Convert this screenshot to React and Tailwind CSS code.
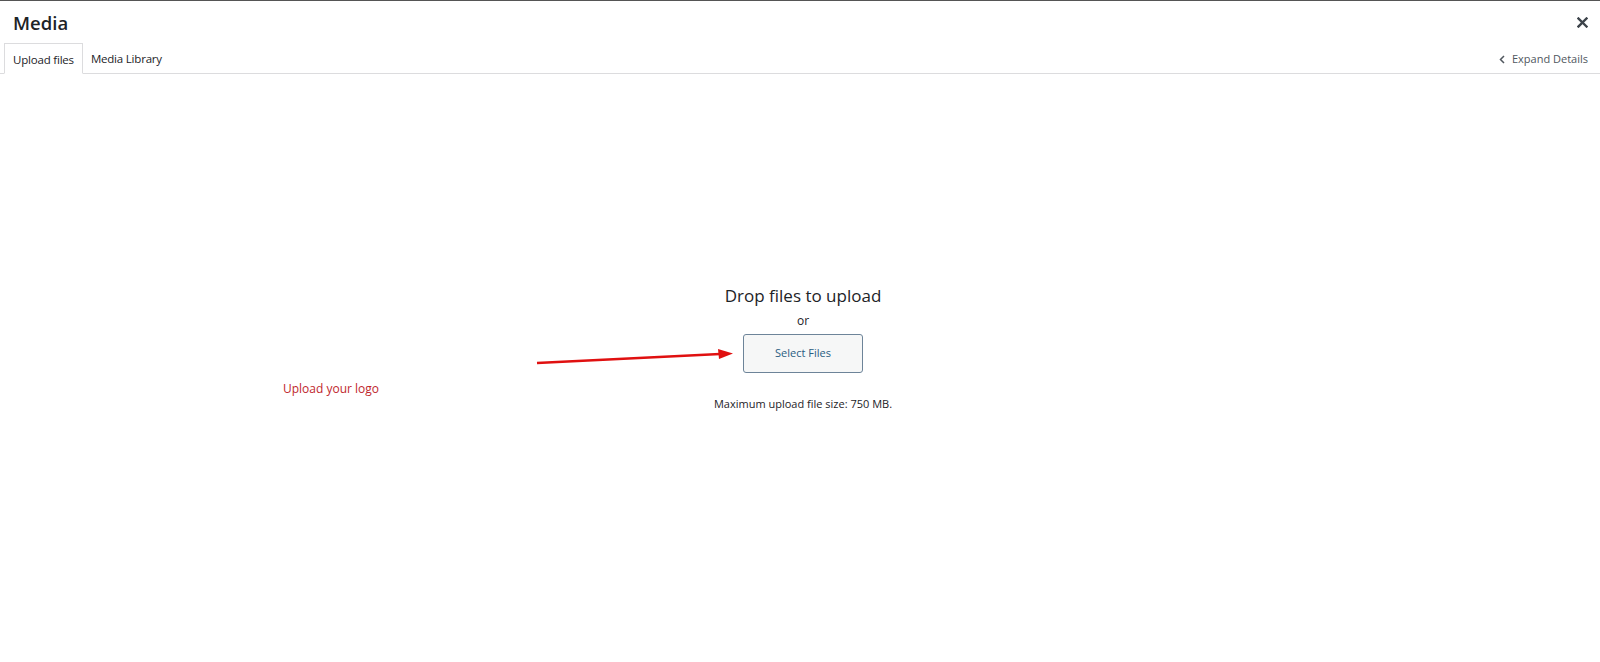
import React from 'react'

const CloseIcon = () => (
  <svg width="11" height="11" viewBox="0 0 11 11" className="block">
    <path d="M1.5 1.5 L9.5 9.5 M9.5 1.5 L1.5 9.5" stroke="#3c434a" strokeWidth="2.4" strokeLinecap="square" />
  </svg>
)

const ChevronLeft = () => (
  <svg width="6" height="9" viewBox="0 0 6 9" className="block">
    <path d="M5 1 L1.5 4.5 L5 8" stroke="#50575e" strokeWidth="1.5" fill="none" />
  </svg>
)

const App = () => {
  return (
    <div className="w-[1600px] h-[662px] bg-white border-t border-[#555] relative overflow-hidden font-['Segoe_UI','Open_Sans','Noto_Sans',sans-serif] text-[#1d2327]">
      {/* modal title */}
      <div className="h-[42px] flex items-center justify-between pl-[13px] pr-[10px]">
        <h1 className="text-[18.5px] font-semibold leading-none pt-[2px]">Media</h1>
        <button className="p-[2px]">
          <CloseIcon />
        </button>
      </div>

      {/* tabs */}
      <div className="h-[31px] flex items-end justify-between border-b border-[#dcdcde] pl-[4px] pr-[12px]">
        <div className="flex items-end h-full">
          <div className="h-[31px] -mb-px px-[8px] pt-[3px] flex items-center bg-white border border-[#dcdcde] border-b-white text-[11.5px] tracking-[-0.2px] text-[#1d2327]">
            Upload files
          </div>
          <div className="h-[31px] px-[8px] pt-[3px] flex items-center text-[11.5px] tracking-[-0.2px] text-[#1d2327]">
            Media Library
          </div>
        </div>
        <div className="h-full pt-[3px] flex items-center gap-[7px] text-[11px] text-[#50575e]">
          <ChevronLeft />
          <span>Expand Details</span>
        </div>
      </div>

      {/* upload area */}
      <div className="flex flex-col items-center pt-[210px] pl-[6px]">
        <h2 className="text-[17px] leading-[24px] text-[#1d2327]">Drop files to upload</h2>
        <p className="text-[12px] leading-[18px] mt-[4px] text-[#1d2327]">or</p>
        <button className="mt-[4px] w-[120px] h-[39px] rounded-[3px] border border-[#6d8499] bg-[#f6f7f7] text-[11px] text-[#2a5d82]">
          Select Files
        </button>
        <p className="mt-[22px] text-[11px] leading-[18px] text-[#1d2327]">Maximum upload file size: 750 MB.</p>
      </div>

      {/* annotation */}
      <svg className="absolute left-[530px] top-[344px]" width="210" height="22" viewBox="0 0 210 22">
        <path d="M7 18 L190 9" stroke="#e01010" strokeWidth="2.6" fill="none" />
        <path d="M203 8.4 L188 4 L189 14 Z" fill="#e01010" />
      </svg>
      <span className="absolute left-[283px] top-[379px] text-[12px] text-[#c0272d]">Upload your logo</span>
    </div>
  )
}

export default App
